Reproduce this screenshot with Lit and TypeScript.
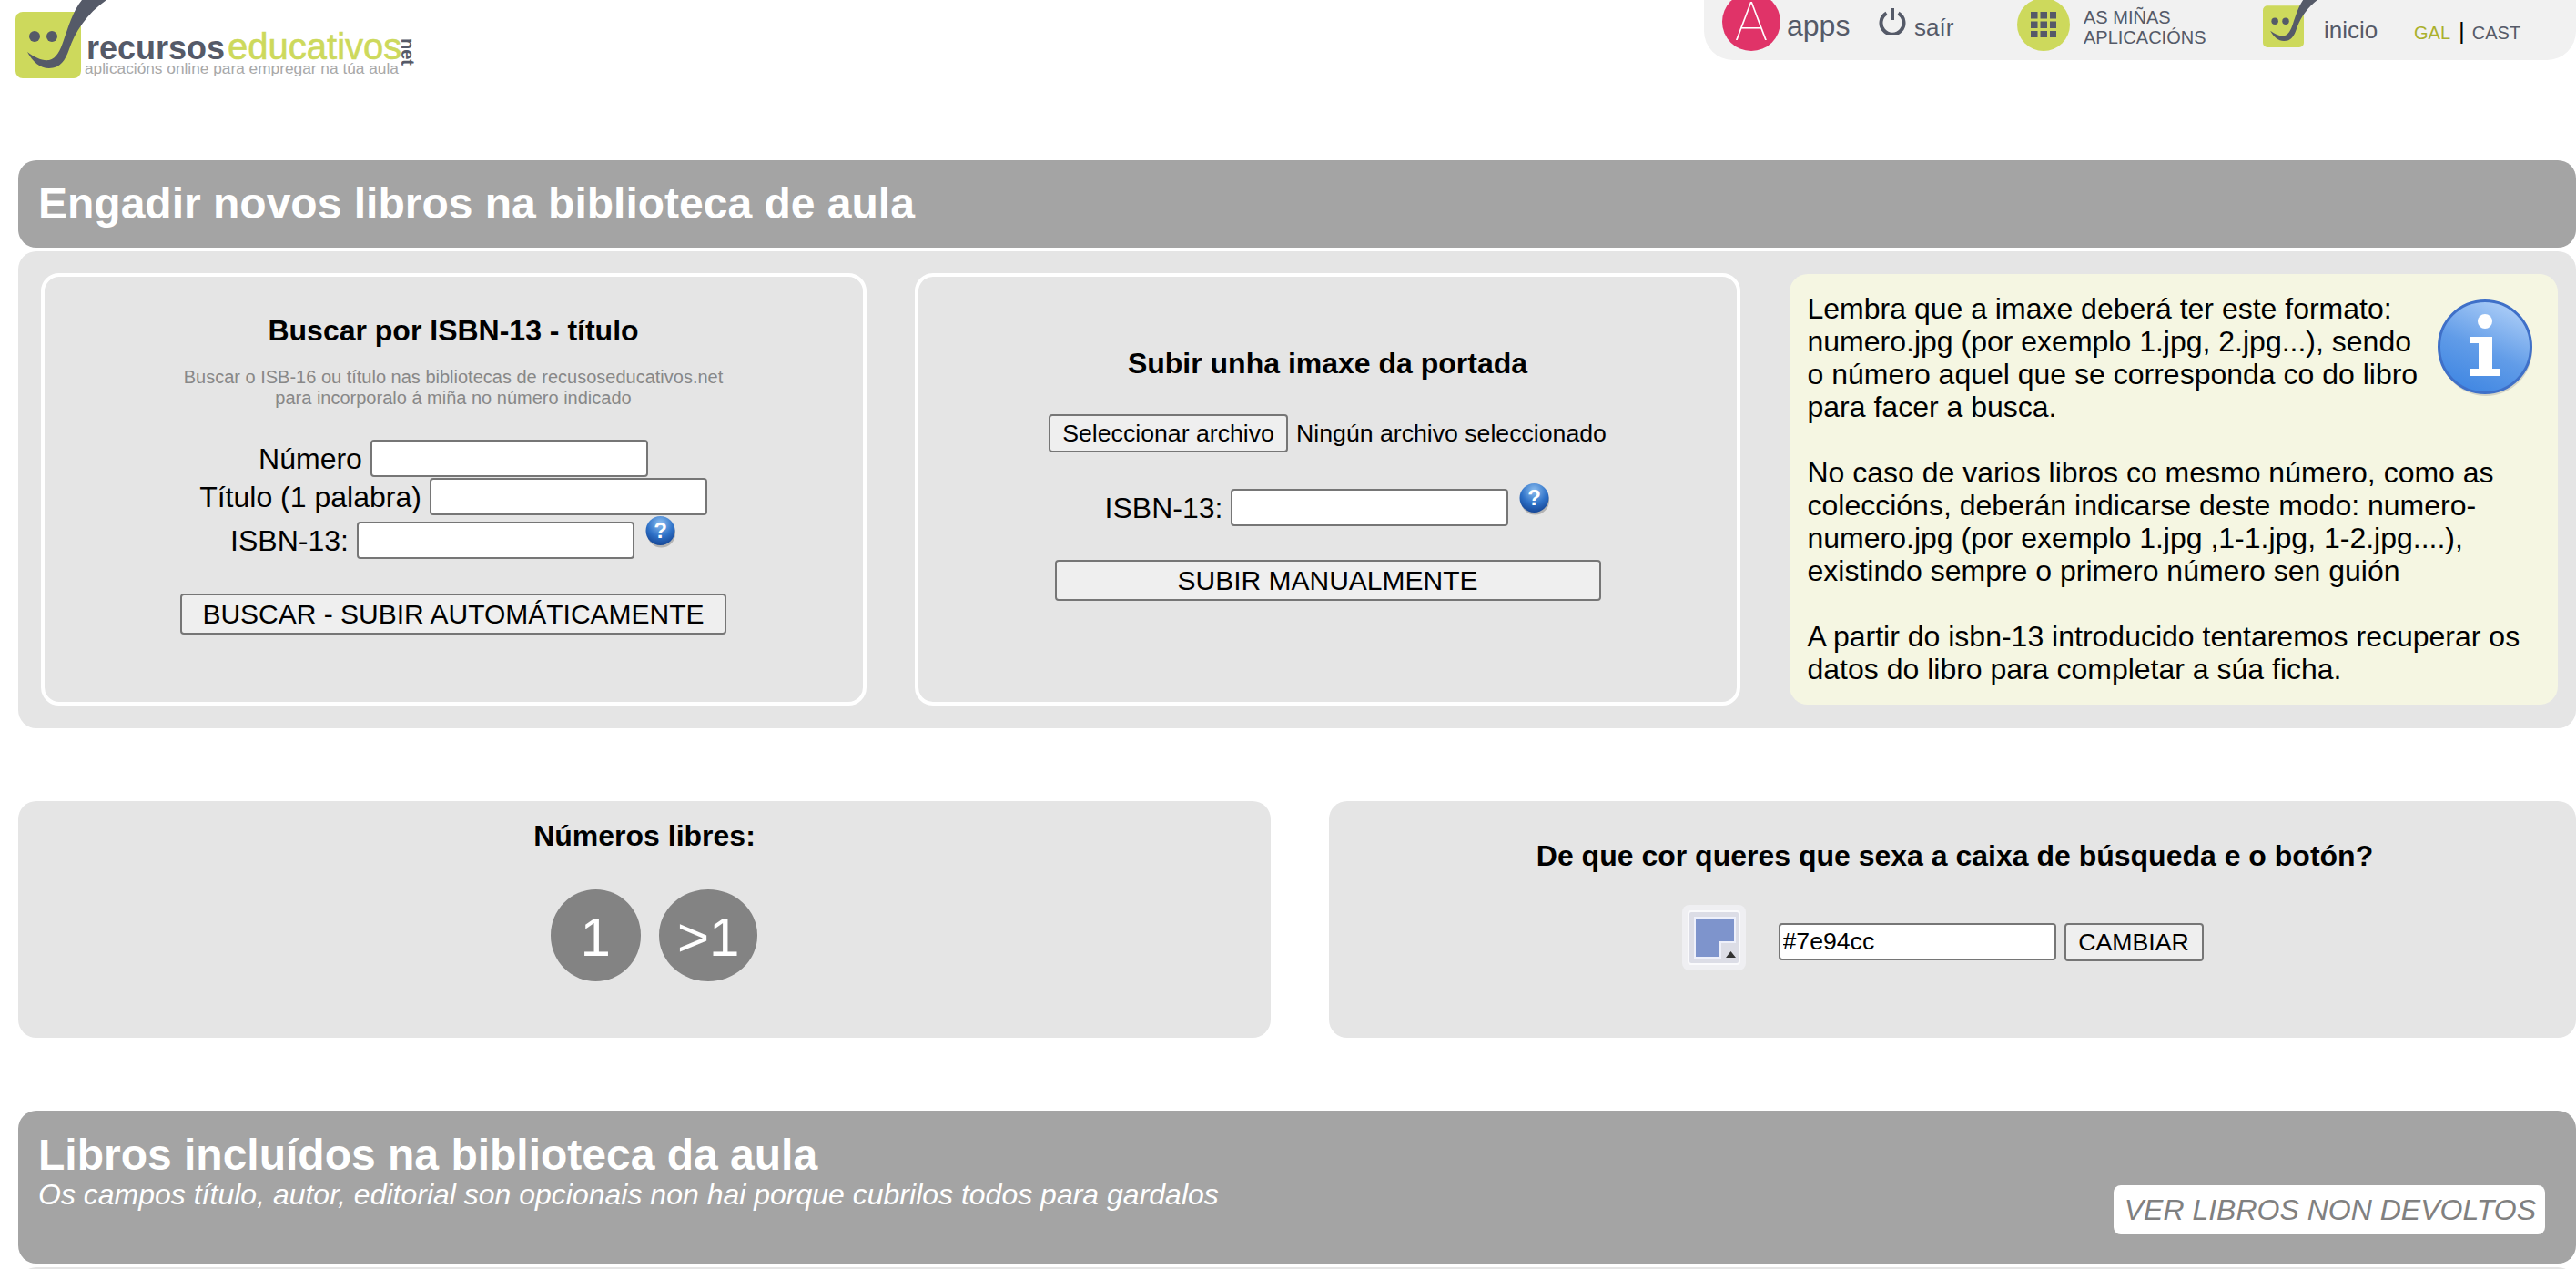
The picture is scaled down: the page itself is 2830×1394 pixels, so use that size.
import { LitElement, html, css, svg } from "lit";
import { customElement } from "lit/decorators.js";

const mark = (w: number, h: number) => html`<svg class="mark" width=${w} height=${h} viewBox="0 0 72 86" aria-hidden="true">
  <rect x="0" y="13" width="72" height="73" rx="8" fill="#cdd95c"></rect>
  <circle cx="21" cy="40" r="6" fill="#555a68"></circle>
  <circle cx="40" cy="40" r="6" fill="#555a68"></circle>
  <path fill="#555a68" d="M13 57C19 68 27 75 37 75C49 75 55 66 59 54C65 36 78 15 100 0L73 0C63 12 58 30 53 44C49 56 45 64 37 66C29 67 21 63 13 57Z"></path>
</svg>`;

const help = () => html`<svg class="help" width="34" height="36" viewBox="0 0 34 36" aria-hidden="true">
  <defs>
    <radialGradient id="hg" cx="50%" cy="25%" r="80%">
      <stop offset="0" stop-color="#8fc0f0"></stop>
      <stop offset="0.55" stop-color="#2f72c8"></stop>
      <stop offset="1" stop-color="#12408f"></stop>
    </radialGradient>
  </defs>
  <ellipse cx="17.5" cy="20" rx="15.5" ry="15.5" fill="#555" opacity="0.35"></ellipse>
  <circle cx="16.5" cy="17" r="16" fill="url(#hg)"></circle>
  <text x="16.5" y="25" text-anchor="middle" class="q">?</text>
</svg>`;

const info = () => html`<svg class="info" width="106" height="108" viewBox="0 0 106 108" aria-hidden="true">
  <defs>
    <linearGradient id="ig" x1="0.75" y1="0" x2="0.3" y2="1">
      <stop offset="0" stop-color="#b0d0f8"></stop>
      <stop offset="0.55" stop-color="#619ce8"></stop>
      <stop offset="1" stop-color="#3f86e2"></stop>
    </linearGradient>
  </defs>
  <circle cx="53" cy="55" r="51" fill="#888" opacity="0.3"></circle>
  <circle cx="52" cy="52" r="50.5" fill="url(#ig)" stroke="#3f70c8" stroke-width="3"></circle>
  <circle cx="52" cy="24" r="8" fill="#fff"></circle>
  <path fill="#fff" d="M36 41H60V76H68V84H36V76H45V48H36Z"></path>
</svg>`;

@customElement("app-root")
export class AppRoot extends LitElement {
  static styles = css`
    :host {
      display: block;
      width: 2830px;
      height: 1394px;
      overflow: hidden;
      background: #fff;
      font-family: "Liberation Sans", Arial, sans-serif;
      color: #000;
      font-size: 32px;
    }
    .top {
      display: flex;
      justify-content: space-between;
      align-items: flex-start;
      height: 176px;
    }
    .logo {
      display: flex;
      margin-left: 17px;
      color: #555a68;
    }
    .logo .mark { flex: none; overflow: visible; }
    .logo-text {
      margin-left: 6px;
      padding-top: 34px;
      position: relative;
    }
    .brand { line-height: 34px; font-size: 36px; font-weight: 700; white-space: nowrap; letter-spacing: 0; }
    .brand span { font-size: 40px; font-weight: 400; color: #cdd95c; margin-left: 3px; -webkit-text-stroke: 0.6px #cdd95c; }
    .tag { font-size: 17.3px; line-height: 10px; color: #a8a8a8; white-space: nowrap; margin-left: -2px; }
    .net {
      position: absolute;
      left: 344px;
      top: 42px;
      writing-mode: vertical-rl;
      font-size: 20px;
      font-weight: 700;
      line-height: 18px;
    }
    .nav {
      width: 958px;
      height: 66px;
      background: #f1f1f1;
      border-radius: 0 0 32px 32px;
      display: flex;
      align-items: flex-start;
      padding-left: 20px;
      box-sizing: border-box;
      color: #555a68;
      white-space: nowrap;
    }
    .apps-dot {
      flex: none;
      width: 64px;
      height: 64px;
      margin-top: -8px;
      border-radius: 50%;
      background: #e03368;
      color: #fff;
      font-family: Roboto, "Liberation Sans", sans-serif;
      font-size: 60px;
      font-weight: 100;
      line-height: 64px;
      text-align: center;
    }
    .apps { font-size: 32px; line-height: 36px; margin: 10px 0 0 7px; width: 101px; }
    .power { flex: none; margin-top: 8px; }
    .sair { font-size: 26px; line-height: 30px; margin: 15px 0 0 9px; width: 113px; }
    .grid-dot {
      flex: none;
      width: 58px;
      height: 58px;
      margin-top: -2px;
      border-radius: 50%;
      background: #cdd95c;
      display: flex;
      align-items: center;
      justify-content: center;
    }
    .mine { font-size: 20px; line-height: 22px; margin: 8px 0 0 15px; width: 197px; }
    .nav .mark { flex: none; overflow: visible; margin-top: -2px; }
    .inicio { font-size: 26px; line-height: 30px; margin: 18px 0 0 22px; width: 99px; }
    .langs { font-size: 20px; line-height: 24px; margin-top: 22px; }
    .langs b { font-weight: 400; color: #aab02c; }
    .langs i { font-style: normal; color: #000; font-size: 26px; margin: 0 8px 0 9px; }

    .bar {
      margin-left: 20px;
      background: #a4a4a4;
      border-radius: 20px;
      color: #fff;
      box-sizing: border-box;
      padding-left: 22px;
    }
    .bar h1 { margin: 0; font-size: 48px; font-weight: 700; line-height: 56px; }
    .bar.one { height: 96px; padding-top: 20px; }
    .bar.two {
      height: 168px;
      padding-top: 21px;
      margin-top: 80px;
      display: flex;
      justify-content: space-between;
    }
    .bar em { display: block; font-size: 32px; line-height: 36px; margin-top: -3px; }
    .not-back {
      align-self: flex-start;
      margin: 61px 34px 0 0;
      height: 54px;
      width: 474px;
      box-sizing: border-box;
      background: #fff;
      border-radius: 8px;
      color: #808080;
      font-size: 32px;
      font-style: italic;
      line-height: 54px;
      text-align: right;
      padding-right: 10px;
      white-space: nowrap;
    }
    .panel {
      margin: 4px 0 0 20px;
      height: 524px;
      box-sizing: border-box;
      background: #e5e5e5;
      border-radius: 20px;
      padding: 24px 20px 0 24.5px;
      display: grid;
      grid-template-columns: 907px 907px 844px;
      column-gap: 53.5px;
      align-items: start;
    }
    .card {
      height: 475px;
      box-sizing: border-box;
      border: 4px solid #fff;
      border-radius: 20px;
      display: flex;
      flex-direction: column;
      align-items: center;
    }
    h2 { margin: 0; font-size: 32px; font-weight: 700; line-height: 36px; white-space: nowrap; }
    .card.a { padding-top: 41px; }
    .card.b { padding-top: 77px; }
    .note { color: #888; font-size: 20px; line-height: 22.5px; text-align: center; margin: 22px 0 0; }
    .row { display: flex; align-items: center; justify-content: center; gap: 9px; white-space: nowrap; line-height: 36px; }
    .row .help { margin-left: 3px; align-self: flex-start; }
    .rows { margin-top: 35px; display: flex; flex-direction: column; gap: 1px; align-items: center; }
    .rows .row.last { margin-top: 6px; }
    .rows .row.last .help { margin-top: -7px; }
    input[type="text"] {
      width: 305px;
      height: 41px;
      box-sizing: border-box;
      border: 2px solid #767676;
      border-radius: 4px;
      background: #fff;
      font: 26.67px "Liberation Sans", Arial, sans-serif;
      padding: 0 2px 0 3px;
      margin: 0;
      outline: none;
    }
    button {
      font-family: "Liberation Sans", Arial, sans-serif;
      background: #efefef;
      border: 2px solid #767676;
      border-radius: 4px;
      color: #000;
      margin: 0;
      padding: 0;
    }
    .wide { width: 600px; height: 45px; font-size: 30px; line-height: 36px; }
    .a .wide { margin-top: 38px; }
    .file { display: flex; align-items: center; margin-top: 38px; font-size: 26.67px; gap: 9px; }
    .file button { width: 263px; height: 42px; font-size: 26.67px; }
    .b .row { margin-top: 40px; }
    .b .row .help { margin-top: -7px; }
    .b .wide { margin-top: 37px; }
    .tips {
      height: 473px;
      margin-top: 1px;
      box-sizing: border-box;
      background: #f5f6e2;
      border-radius: 20px;
      padding: 20px 20px 0;
      font-size: 32px;
      line-height: 36px;
    }
    .tips p { margin: 0 0 36px; white-space: nowrap; }
    .tips .info { float: right; margin: 8px 6px 0 0; }
    .lower {
      margin: 80px 0 0 20px;
      display: grid;
      grid-template-columns: 1376px 1370px;
      column-gap: 64px;
    }
    .box {
      height: 260px;
      box-sizing: border-box;
      background: #e5e5e5;
      border-radius: 20px;
      display: flex;
      flex-direction: column;
      align-items: center;
    }
    .box.l { padding-top: 20px; }
    .box.r { padding-top: 42px; }
    .box.r h2 { margin-left: 5px; }
    .nums { display: flex; gap: 20px; margin: 41px 0 0 21px; }
    .num {
      height: 101px;
      border-radius: 50%;
      background: #838383;
      color: #fff;
      font-size: 60px;
      line-height: 105px;
    }
    .num.s { padding: 0 33px; }
    .num.m { padding: 0 20px; }
    .color { display: flex; align-items: flex-start; margin: 36px 22px 0 0; }
    .swatch { flex: none; margin-right: 36px; }
    .color input { margin-top: 20px; }
    .color button { width: 153px; height: 42px; margin: 20px 0 0 9px; font-size: 26.67px; }
    .rest {
      margin: 4px 0 0 20px;
      height: 40px;
      background: #e5e5e5;
      border-radius: 20px 20px 0 0;
    }
    .q { font: 700 24px "Liberation Sans", sans-serif; fill: #fff; }
  `;

  render() {
    return html`
      <header class="top">
        <div class="logo">
          ${mark(72, 86)}
          <div class="logo-text">
            <div class="brand">recursos<span>educativos</span></div>
            <div class="tag">aplicacións online para empregar na túa aula</div>
            <div class="net">net</div>
          </div>
        </div>
        <nav class="nav">
          <div class="apps-dot">A</div>
          <div class="apps">apps</div>
          <svg class="power" width="30" height="30" viewBox="0 0 30 30" aria-hidden="true">
            <path d="M8.5 6.5A12.5 12.5 0 1 0 21.5 6.5" fill="none" stroke="#555a68" stroke-width="4"></path>
            <path d="M15 1V14" fill="none" stroke="#555a68" stroke-width="4"></path>
          </svg>
          <div class="sair">saír</div>
          <div class="grid-dot">
            <svg width="28" height="28" viewBox="0 0 28 28" fill="#555a68" aria-hidden="true">
              ${[0, 10.5, 21].map((y) => [0, 10.5, 21].map((x) => svg`<rect x=${x} y=${y} width="7.5" height="7.5"></rect>`))}
            </svg>
          </div>
          <div class="mine">AS MIÑAS<br />APLICACIÓNS</div>
          ${mark(45, 54)}
          <div class="inicio">inicio</div>
          <div class="langs"><b>GAL</b><i>|</i>CAST</div>
        </nav>
      </header>

      <div class="bar one"><h1>Engadir novos libros na biblioteca de aula</h1></div>
      <section class="panel">
        <div class="card a">
          <h2>Buscar por ISBN-13 - título</h2>
          <p class="note">Buscar o ISB-16 ou título nas bibliotecas de recusoseducativos.net<br />para incorporalo á miña no número indicado</p>
          <div class="rows">
            <div class="row">Número <input type="text" /></div>
            <div class="row">Título (1 palabra) <input type="text" /></div>
            <div class="row last">ISBN-13: <input type="text" />${help()}</div>
          </div>
          <button class="wide">BUSCAR - SUBIR AUTOMÁTICAMENTE</button>
        </div>
        <div class="card b">
          <h2>Subir unha imaxe da portada</h2>
          <div class="file"><button>Seleccionar archivo</button>Ningún archivo seleccionado</div>
          <div class="row">ISBN-13: <input type="text" />${help()}</div>
          <button class="wide">SUBIR MANUALMENTE</button>
        </div>
        <div class="tips">
          ${info()}
          <p>Lembra que a imaxe deberá ter este formato:<br />numero.jpg (por exemplo 1.jpg, 2.jpg...), sendo<br />o número aquel que se corresponda co do libro<br />para facer a busca.</p>
          <p>No caso de varios libros co mesmo número, como as<br />coleccións, deberán indicarse deste modo: numero-<br />numero.jpg (por exemplo 1.jpg ,1-1.jpg, 1-2.jpg....),<br />existindo sempre o primero número sen guión</p>
          <p>A partir do isbn-13 introducido tentaremos recuperar os<br />datos do libro para completar a súa ficha.</p>
        </div>
      </section>

      <section class="lower">
        <div class="box l">
          <h2>Números libres:</h2>
          <div class="nums"><div class="num s">1</div><div class="num m">&gt;1</div></div>
        </div>
        <div class="box r">
          <h2>De que cor queres que sexa a caixa de búsqueda e o botón?</h2>
          <div class="color">
            <svg class="swatch" width="70" height="72" viewBox="0 0 70 72" aria-hidden="true">
              <rect x="0" y="0" width="70" height="72" rx="8" fill="#efeff2"></rect>
              <rect x="7" y="7" width="56" height="58" rx="3" fill="#dcdde6" stroke="#fafafc" stroke-width="2"></rect>
              <path d="M14 14H58V41H42V58H14Z" fill="#7e94cc" stroke="#eef0fa" stroke-width="2"></path>
              <path d="M48 58L53.500 51L59 58Z" fill="#333"></path>
            </svg>
            <input type="text" value="#7e94cc" />
            <button>CAMBIAR</button>
          </div>
        </div>
      </section>

      <div class="bar two">
        <div>
          <h1>Libros incluídos na biblioteca da aula</h1>
          <em>Os campos título, autor, editorial son opcionais non hai porque cubrilos todos para gardalos</em>
        </div>
        <div class="not-back">VER LIBROS NON DEVOLTOS</div>
      </div>
      <div class="rest"></div>
    `;
  }
}
